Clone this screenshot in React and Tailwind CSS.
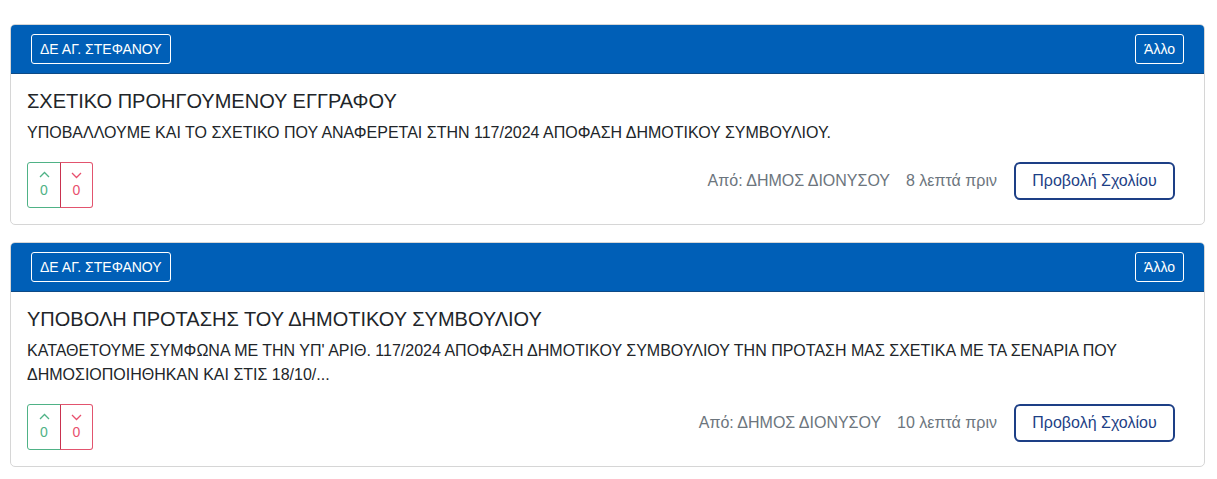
const posts = [
  {
    area: "ΔΕ ΑΓ. ΣΤΕΦΑΝΟΥ",
    tag: "Άλλο",
    title: "ΣΧΕΤΙΚΟ ΠΡΟΗΓΟΥΜΕΝΟΥ ΕΓΓΡΑΦΟΥ",
    body: "ΥΠΟΒΑΛΛΟΥΜΕ ΚΑΙ ΤΟ ΣΧΕΤΙΚΟ ΠΟΥ ΑΝΑΦΕΡΕΤΑΙ ΣΤΗΝ 117/2024 ΑΠΟΦΑΣΗ ΔΗΜΟΤΙΚΟΥ ΣΥΜΒΟΥΛΙΟΥ.",
    author: "ΔΗΜΟΣ ΔΙΟΝΥΣΟΥ",
    time: "8 λεπτά πριν",
  },
  {
    area: "ΔΕ ΑΓ. ΣΤΕΦΑΝΟΥ",
    tag: "Άλλο",
    title: "ΥΠΟΒΟΛΗ ΠΡΟΤΑΣΗΣ ΤΟΥ ΔΗΜΟΤΙΚΟΥ ΣΥΜΒΟΥΛΙΟΥ",
    body: "ΚΑΤΑΘΕΤΟΥΜΕ ΣΥΜΦΩΝΑ ΜΕ ΤΗΝ ΥΠ' ΑΡΙΘ. 117/2024 ΑΠΟΦΑΣΗ ΔΗΜΟΤΙΚΟΥ ΣΥΜΒΟΥΛΙΟΥ ΤΗΝ ΠΡΟΤΑΣΗ ΜΑΣ ΣΧΕΤΙΚΑ ΜΕ ΤΑ ΣΕΝΑΡΙΑ ΠΟΥ ΔΗΜΟΣΙΟΠΟΙΗΘΗΚΑΝ ΚΑΙ ΣΤΙΣ 18/10/...",
    author: "ΔΗΜΟΣ ΔΙΟΝΥΣΟΥ",
    time: "10 λεπτά πριν",
  },
];

function Chevron({ up }) {
  return (
    <svg width="11" height="7" viewBox="0 0 11 7" fill="none" stroke="currentColor" strokeWidth="1.3">
      {up ? <path d="M1 6l4.5-4.5L10 6" /> : <path d="M1 1l4.5 4.5L10 1" />}
    </svg>
  );
}

function PostCard({ post }) {
  return (
    <div className="border border-[#d6d6d6] rounded-[5px] overflow-hidden bg-white">
      {/* header */}
      <div className="bg-[#005fb7] border-b border-[#0d4a86] h-[49px] px-[20px] flex items-center justify-between">
        <span className="border border-white rounded-[3px] text-white text-[14px] font-medium h-[30px] px-[8px] flex items-center">
          {post.area}
        </span>
        <span className="border border-white rounded-[3px] text-white text-[14px] font-medium h-[30px] px-[8px] flex items-center">
          {post.tag}
        </span>
      </div>

      <div className="pt-[15px] pb-[16px] pl-[16px] pr-[29px]">
        <h2 className="text-[20px] leading-[24px] text-[#212529]">{post.title}</h2>
        <p className="mt-[8px] text-[16px] leading-[24px] text-[#212529]">{post.body}</p>

        <div className="mt-[17px] flex items-start justify-between">
          <div className="flex h-[46px]">
            <button className="w-[34px] border border-[#4fb286] rounded-l-[3px] text-[#4fb286] flex flex-col items-center pt-[8px] gap-[4px] text-[14px] leading-[16px]">
              <Chevron up />
              <span>0</span>
            </button>
            <button className="w-[33px] border border-[#e2546e] border-l-[#c9324f] rounded-r-[3px] -ml-px text-[#e8506e] flex flex-col items-center pt-[9px] gap-[3px] text-[14px] leading-[16px]">
              <Chevron />
              <span>0</span>
            </button>
          </div>

          <div className="flex items-center h-[38px]">
            <span className="text-[16px] text-[#6c757d]">Από: {post.author}</span>
            <span className="text-[16px] text-[#6c757d] ml-[16px]">{post.time}</span>
            <button className="ml-[17px] h-[38px] w-[161px] border-2 border-[#1d3f86] rounded-[6px] text-[16px] text-[#1d3f86]">
              Προβολή Σχολίου
            </button>
          </div>
        </div>
      </div>
    </div>
  );
}

export default function App() {
  return (
    <div
      className="min-h-screen bg-white pt-[24px] pl-[10px] pr-[12px] flex flex-col gap-[17px]"
      style={{ fontFamily: '"Liberation Sans", Arial, sans-serif' }}
    >
      {posts.map((p, i) => (
        <PostCard key={i} post={p} />
      ))}
    </div>
  );
}
